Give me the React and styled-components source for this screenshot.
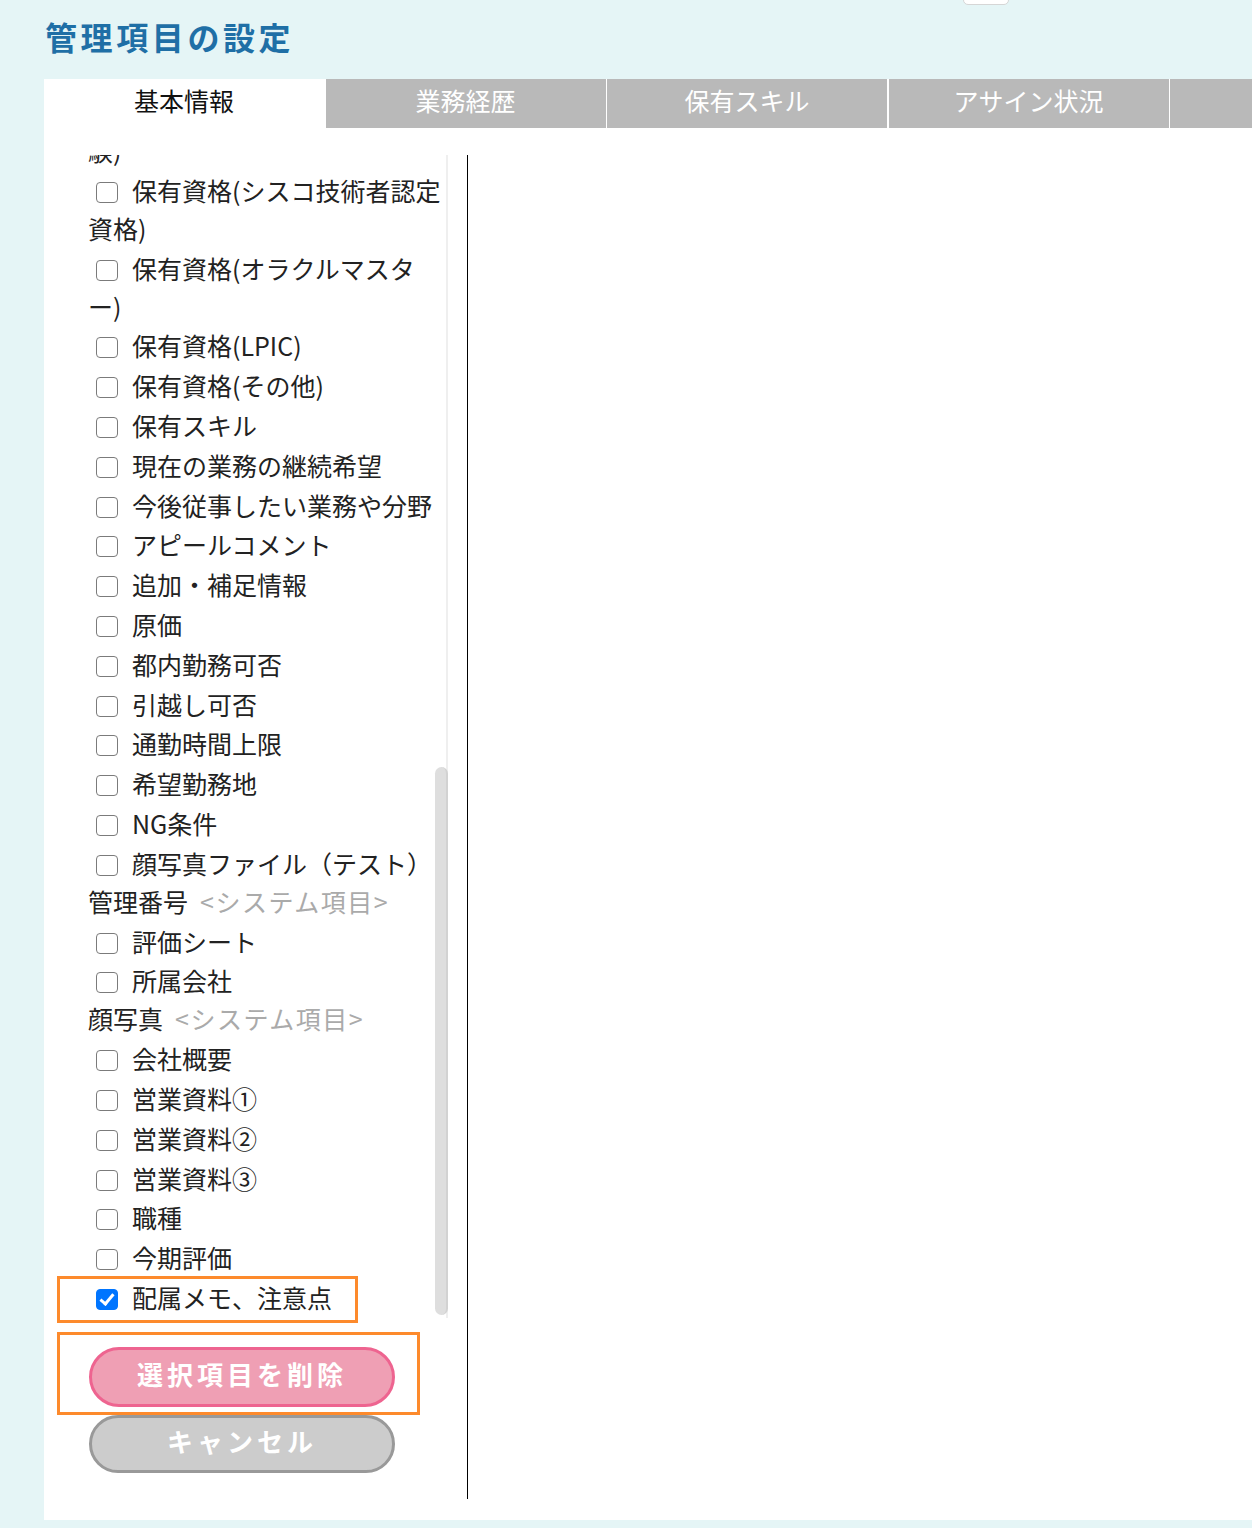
import React from "react";
import styled, { createGlobalStyle } from "styled-components";

const GlobalStyle = createGlobalStyle`
  html, body {
    margin: 0;
    padding: 0;
    background: #e5f5f6;
  }
  body {
    font-family: "Noto Sans CJK JP", "Noto Sans", sans-serif;
    color: #222;
  }
`;

const Page = styled.div`
  width: 1252px;
  min-height: 1528px;
  overflow: hidden;
`;

const Header = styled.div`
  position: relative;
  display: flex;
  align-items: center;
  height: 79px;
  box-sizing: border-box;
  padding: 0 0 8px 45px;
`;

const Title = styled.h1`
  margin: 0;
  font-size: 32px;
  line-height: 1;
  font-weight: 700;
  letter-spacing: 3.6px;
  color: #1f6fa6;
`;

const TopStub = styled.div`
  position: absolute;
  left: 963px;
  top: -7px;
  width: 44px;
  height: 10px;
  background: #fff;
  border: 1px solid #d6d6d6;
  border-radius: 5px;
`;

const Panel = styled.div`
  margin-left: 44px;
  background: #fff;
`;

const TabBar = styled.div`
  display: flex;
  height: 49px;
  overflow: hidden;
`;

const Tab = styled.div`
  flex: 0 0 280px;
  margin-left: ${(p) => (p.$first ? "0" : "1.5px")};
  display: flex;
  align-items: center;
  justify-content: center;
  box-sizing: border-box;
  padding-bottom: 8px;
  font-size: 25px;
  background: ${(p) => (p.$active ? "#fff" : "#b9b9b9")};
  color: ${(p) => (p.$active ? "#111" : "#fff")};
`;

const Body = styled.div`
  display: flex;
  padding: 27px 0 21px;
`;

const LeftCol = styled.div`
  position: relative;
  width: 379px;
  padding-left: 44px;
  display: flex;
  flex-direction: column;
`;

const RightCol = styled.div`
  flex: 1;
  border-left: 1px solid #000;
  min-height: 1344px;
`;

const ListBox = styled.div`
  position: relative;
  width: 360px;
  height: 1163px;
  overflow: hidden;
  display: flex;
  flex-direction: column;
  justify-content: flex-end;
`;

const ListInner = styled.div`
  flex-shrink: 0;
  padding-bottom: 2px;
  font-size: 25px;
  line-height: 38px;
  color: #222;
`;

const Item = styled.label`
  display: block;
  margin-top: 1.8px;
`;

const Heading = styled.div`
  display: block;
`;

const SysNote = styled.span`
  color: #aaa;
  margin-left: 12px;
  letter-spacing: 1.5px;
`;

const Check = styled.input.attrs({ type: "checkbox" })`
  appearance: none;
  -webkit-appearance: none;
  position: relative;
  box-sizing: border-box;
  width: 22px;
  height: 21px;
  margin: 0 14px 0 8px;
  vertical-align: -2px;
  border: 1.8px solid #7b7b7b;
  border-radius: 4px;
  background: #fff;

  &:checked {
    background: #0075ff;
    border-color: #0075ff;
  }
  &:checked::after {
    content: "";
    position: absolute;
    left: 5.5px;
    top: 1px;
    width: 5px;
    height: 11px;
    border: solid #fff;
    border-width: 0 3px 3px 0;
    transform: rotate(40deg);
  }
`;

const Track = styled.div`
  position: absolute;
  top: 0;
  right: 0;
  width: 2px;
  height: 100%;
  background: #efefef;
`;

const Thumb = styled.div`
  position: absolute;
  right: 0;
  top: 612px;
  width: 13px;
  height: 548px;
  background: #dedede;
  border-right: 2px solid #d2d2d2;
  box-sizing: border-box;
  border-radius: 7px;
`;

const Buttons = styled.div`
  display: flex;
  flex-direction: column;
  gap: 8px;
  margin-top: 29px;
  padding-left: 1px;
`;

const Pill = styled.button`
  width: 306px;
  height: ${(p) => (p.$variant === "danger" ? "60px" : "58px")};
  border-radius: 30px;
  border: 3px solid ${(p) => (p.$variant === "danger" ? "#ee6490" : "#999")};
  background: ${(p) => (p.$variant === "danger" ? "#ef9fb4" : "#cccccc")};
  color: #fff;
  font-family: "Noto Sans CJK JP", sans-serif;
  font-size: 26px;
  font-weight: 700;
  letter-spacing: 4px;
  padding: 0 0 7px;
  cursor: pointer;
`;

const Annotation = styled.div`
  position: absolute;
  left: 13px;
  top: ${(p) => p.$top}px;
  width: ${(p) => p.$w}px;
  height: ${(p) => p.$h}px;
  border: 3px solid #fd8a2c;
  box-sizing: border-box;
  pointer-events: none;
`;

const tabs = ["基本情報", "業務経歴", "保有スキル", "アサイン状況", ""];

const rows = [
  { t: "氏名" },
  { t: "フリガナ" },
  { t: "性別" },
  { t: "生年月日" },
  { t: "最寄駅" },
  { t: "稼働可能日" },
  { t: "希望単価" },
  { t: "経験年数" },
  { t: "保有資格(基本情報技術者試験)" },
  { t: "保有資格(シスコ技術者認定資格)" },
  { t: "保有資格(オラクルマスター)" },
  { t: "保有資格(LPIC)" },
  { t: "保有資格(その他)" },
  { t: "保有スキル" },
  { t: "現在の業務の継続希望" },
  { t: "今後従事したい業務や分野" },
  { t: "アピールコメント" },
  { t: "追加・補足情報" },
  { t: "原価" },
  { t: "都内勤務可否" },
  { t: "引越し可否" },
  { t: "通勤時間上限" },
  { t: "希望勤務地" },
  { t: "NG条件" },
  { t: "顔写真ファイル（テスト）" },
  { t: "管理番号", sys: true },
  { t: "評価シート" },
  { t: "所属会社" },
  { t: "顔写真", sys: true },
  { t: "会社概要" },
  { t: "営業資料①" },
  { t: "営業資料②" },
  { t: "営業資料③" },
  { t: "職種" },
  { t: "今期評価" },
  { t: "配属メモ、注意点", checked: true },
];

export default function App() {
  return (
    <Page>
      <GlobalStyle />
      <Header>
        <Title>管理項目の設定</Title>
        <TopStub />
      </Header>
      <Panel>
        <TabBar>
          {tabs.map((t, i) => (
            <Tab key={i} $first={i === 0} $active={i === 0}>
              {t}
            </Tab>
          ))}
        </TabBar>
        <Body>
          <LeftCol>
            <ListBox>
              <ListInner>
                {rows.map((r, i) =>
                  r.sys ? (
                    <Heading key={i}>
                      {r.t}
                      <SysNote>&lt;システム項目&gt;</SysNote>
                    </Heading>
                  ) : (
                    <Item key={i}>
                      <Check defaultChecked={!!r.checked} />
                      {r.t}
                    </Item>
                  )
                )}
              </ListInner>
              <Track />
              <Thumb />
            </ListBox>
            <Buttons>
              <Pill $variant="danger">選択項目を削除</Pill>
              <Pill>キャンセル</Pill>
            </Buttons>
            <Annotation $top={1121} $w={301} $h={47} />
            <Annotation $top={1177} $w={363} $h={83} />
          </LeftCol>
          <RightCol />
        </Body>
      </Panel>
    </Page>
  );
}
